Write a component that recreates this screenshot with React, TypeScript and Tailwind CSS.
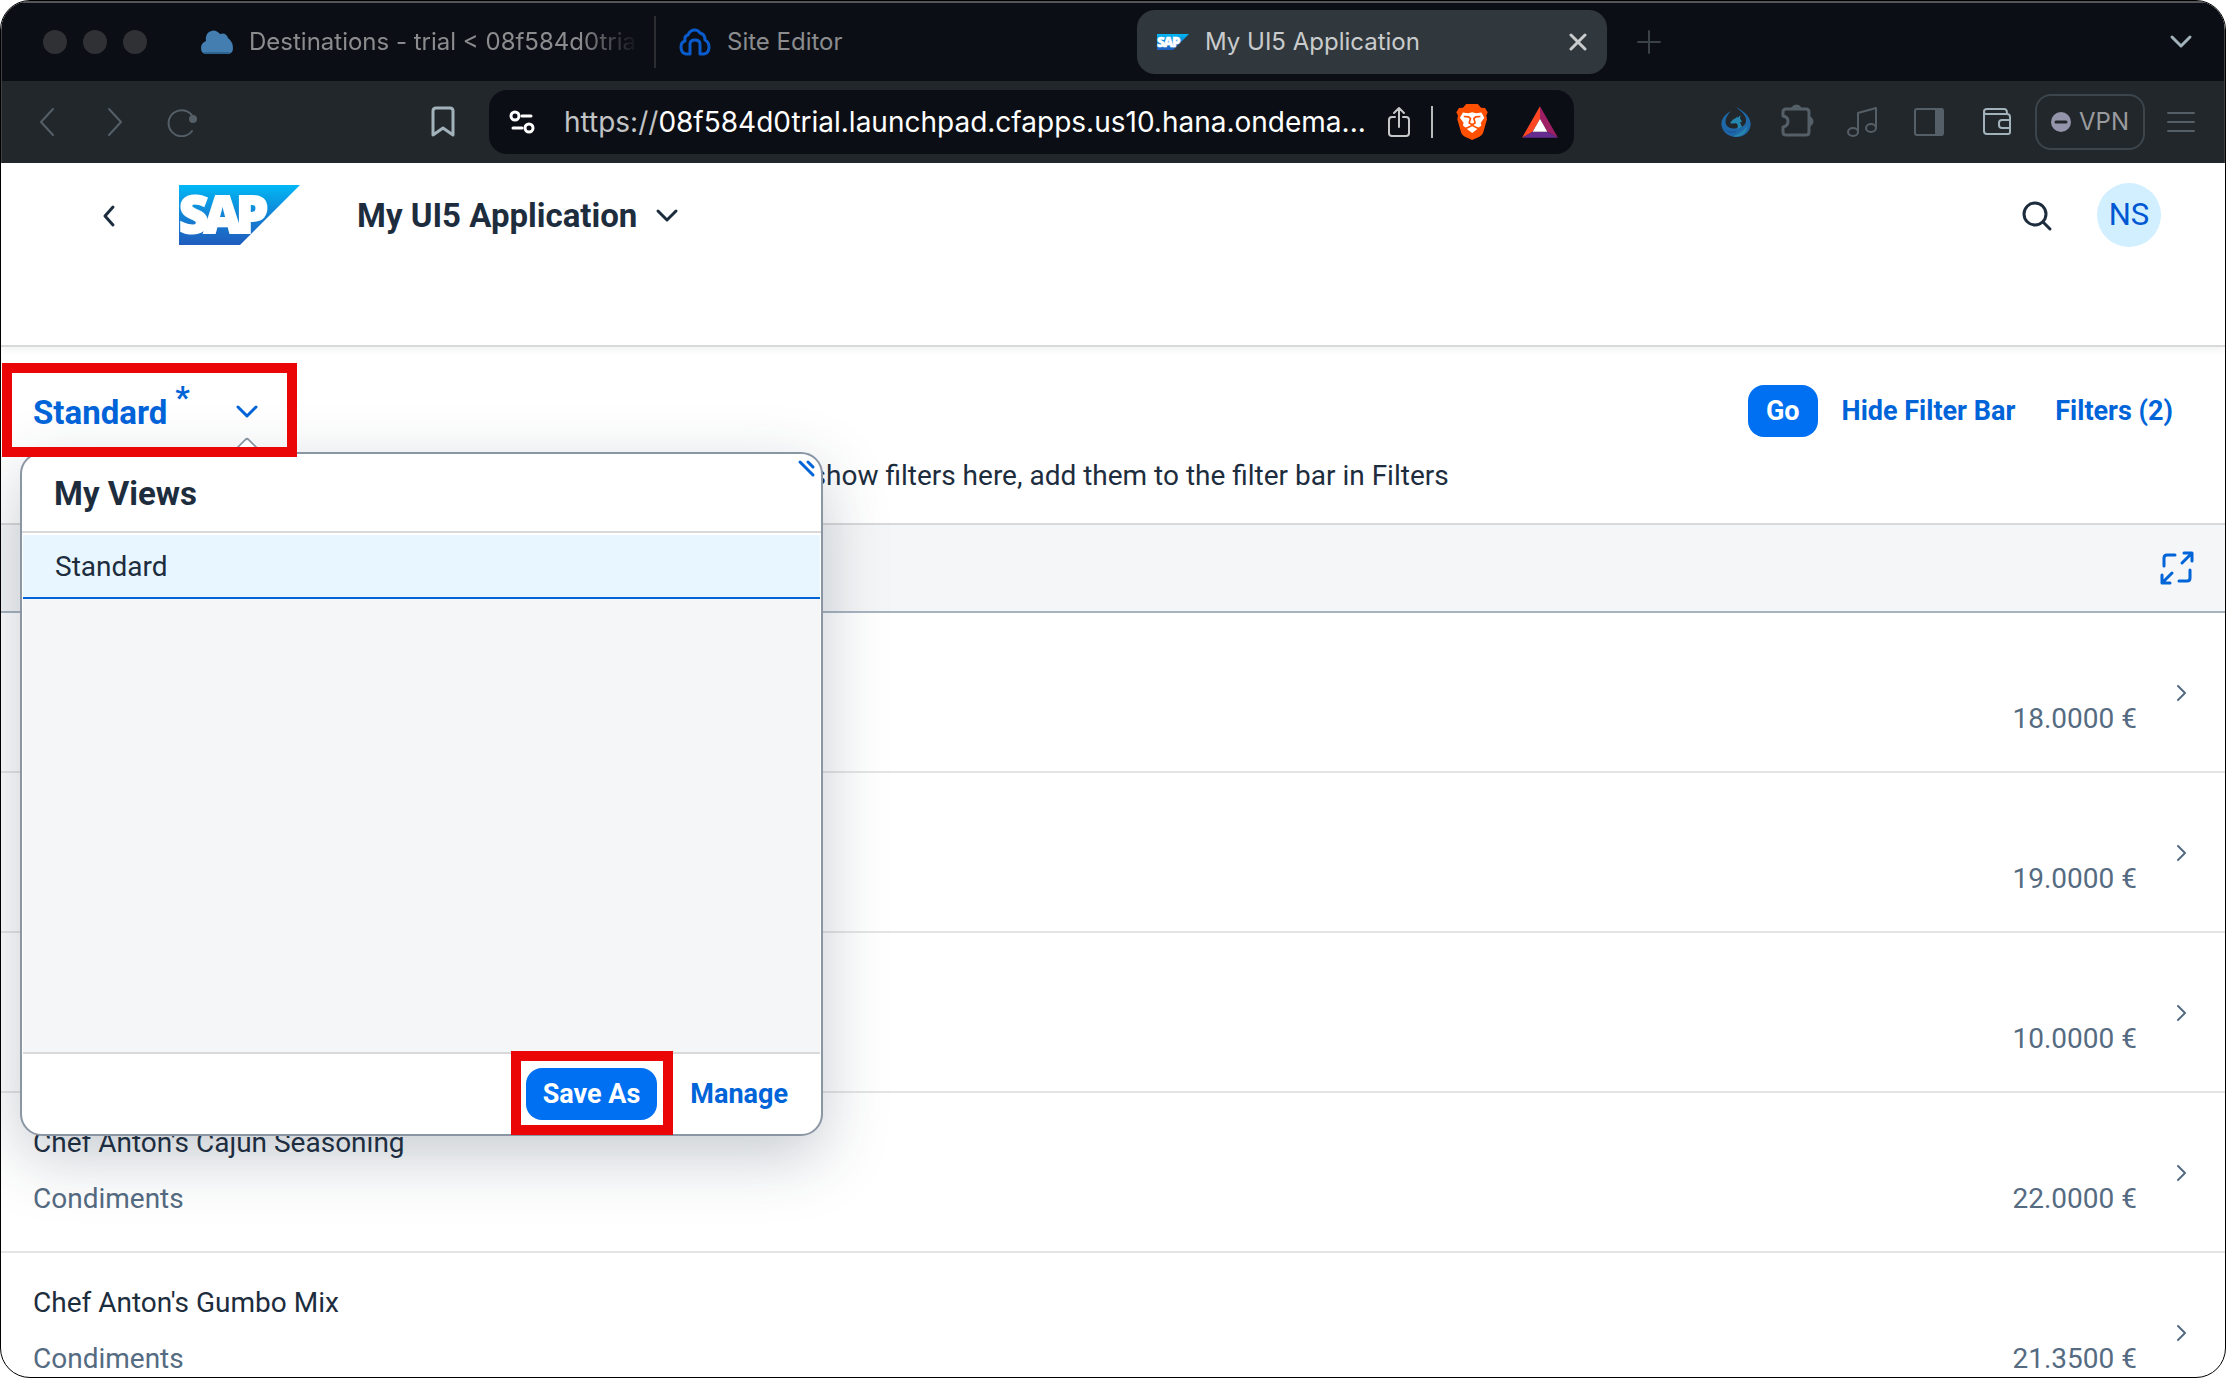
import type { ReactNode } from "react";

function Glyph({
  w,
  h,
  d,
  stroke = 2,
  className = "",
  children,
}: {
  w: number;
  h: number;
  d?: string;
  stroke?: number;
  className?: string;
  children?: ReactNode;
}) {
  return (
    <svg
      width={w}
      height={h}
      viewBox={`0 0 ${w} ${h}`}
      fill="none"
      stroke="currentColor"
      strokeWidth={stroke}
      strokeLinecap="round"
      strokeLinejoin="round"
      className={`shrink-0 ${className}`}
      aria-hidden="true"
    >
      {d && <path d={d} />}
      {children}
    </svg>
  );
}

function SapLogo({ id, className }: { id: string; className: string }) {
  return (
    <svg viewBox="0 0 121 60" className={`shrink-0 overflow-visible ${className}`} role="img" aria-label="SAP">
      <defs>
        <linearGradient id={id} x1="0" y1="0" x2="0" y2="1">
          <stop offset="0" stopColor="#00b8f5" />
          <stop offset="0.45" stopColor="#1188d8" />
          <stop offset="1" stopColor="#1f5dbd" />
        </linearGradient>
      </defs>
      <path d="M0 0H121L61 60H0Z" fill={`url(#${id})`} />
      <g fill="#fff" stroke="#fff" strokeWidth="2" fontFamily="Open Sans, sans-serif" fontWeight="800" fontSize="51">
        <text x="0" y="48">S</text>
        <text x="25" y="48">A</text>
        <text x="57" y="48">P</text>
      </g>
    </svg>
  );
}

function BraveIcon() {
  return (
    <svg width="32" height="36" viewBox="0 0 95 109" className="shrink-0" aria-hidden="true">
      <path
        fill="#ff4f00"
        d="M30 0H65L75 11L87 12L95 25L91 35L93 46L81 88Q78 95 70 99L48 109L26 99Q18 95 15 88L3 46L5 35L0 25L8 12L20 11Z"
      />
      <path
        fill="#fff"
        d="M20 26L36 28L48 25L60 28L76 26L85 42L74 57L76 65L68 71L60 68L48 62L36 68L28 71L20 65L22 57L11 42Z"
      />
      <path fill="#fff" d="M32 76L48 67L64 76L48 88Z" />
      <path fill="none" stroke="#ff4f00" strokeWidth="5" d="M23 38L37 39L43 44L39 57L48 63L57 57L53 44L59 39L73 38" />
    </svg>
  );
}

function BatIcon() {
  return (
    <svg width="36" height="32" viewBox="0 0 108 95" className="shrink-0" aria-hidden="true">
      <path fill="#ff4724" d="M54 0L0 95L32 77L54 38Z" />
      <path fill="#9e1f63" d="M54 0L108 95L76 77L54 38Z" />
      <path fill="#662d91" d="M0 95H108L76 77H32Z" />
      <path fill="#fff" d="M54 38L76 77H32Z" />
    </svg>
  );
}

function PhoenixIcon() {
  return (
    <svg width="30" height="30" viewBox="0 0 88 90" className="shrink-0" aria-hidden="true">
      <path
        fill="#1e68a8"
        d="M30 12C10 22 0 36 0 52C2 76 22 90 44 90C68 90 88 74 88 50C86 26 66 12 44 0C62 16 76 26 74 42C72 54 64 60 54 62C40 66 22 66 15 54C8 40 18 22 30 12Z"
      />
      <path fill="#2587b0" d="M26 48L38 34L36 38L50 28L48 34L58 24L56 34L62 44L56 46L62 60L46 66C52 58 50 52 44 49C38 48 34 52 26 48Z" />
      <path fill="#2784ad" d="M36 89C46 80 62 80 76 58C80 74 62 92 36 89Z" />
      <path fill="#1b5a9c" d="M4 62C16 74 34 76 48 70C40 84 20 82 4 62Z" />
    </svg>
  );
}

function BrowserTabs() {
  return (
    <div className="flex h-20 shrink-0 items-center border-t-2 border-[#55555a] bg-[#0c0e15] pr-[30px] text-2xl text-[#8b8c8e]">
      <div className="ml-[41px] flex gap-4">
        <span className="size-6 rounded-full bg-[#303135]" />
        <span className="size-6 rounded-full bg-[#303135]" />
        <span className="size-6 rounded-full bg-[#303135]" />
      </div>
      <a href="#destinations" className="ml-[54px] flex w-[455px] shrink-0 items-center border-r-2 border-[#2c2d31] py-[10px]">
        <svg width="32" height="24" viewBox="0 0 32 24" className="shrink-0" aria-hidden="true">
          <path fill="#447eb0" d="M6 24Q0 24 0 18Q0 13 5 11Q4 5 8 2Q14-2 19 4Q25 2 27 8Q32 12 32 18Q32 24 26 24Z" />
          <path fill="#2d6391" d="M3 22H29V24H3Z" />
        </svg>
        <span className="ml-4 w-[390px] overflow-hidden mask-r-from-85% mask-r-to-100% whitespace-nowrap">
          Destinations - trial &lt; 08f584d0trial
        </span>
      </a>
      <a href="#site-editor" className="ml-[23px] flex w-[458px] shrink-0 items-center gap-4">
        <Glyph w={32} h={28} stroke={3} className="text-[#0a5ccc]">
          <path d="M11 26H7Q2 25 2 19Q2 14 6 13Q5 8 9 7Q11 2 16 2Q19 2 21 5Q26 6 26 12Q30 14 30 19Q30 25 25 26H21V16Q21 12 16 12Q11 12 11 16Z" />
        </Glyph>
        Site Editor
      </a>
      <div className="flex h-16 w-[470px] shrink-0 items-center rounded-[18px] bg-[#30383d] px-5 text-[#c9cbcc]">
        <SapLogo id="sap-tab" className="h-4 w-8" />
        <a href="#application" className="ml-4 grow">
          My UI5 Application
        </a>
        <button type="button" aria-label="Close tab">
          <Glyph w={18} h={18} d="M2 2L16 16M16 2L2 16" stroke={3} />
        </button>
      </div>
      <button type="button" aria-label="New tab" className="ml-[30px] text-[#3a4248]">
        <Glyph w={24} h={24} d="M12 1V23M1 12H23" />
      </button>
      <button type="button" aria-label="List tabs" className="ml-auto text-[#a2b2ba]">
        <Glyph w={26} h={18} d="M4 4L13 13L22 4" stroke={3} />
      </button>
    </div>
  );
}

function BrowserToolbar() {
  return (
    <div className="flex h-[82px] shrink-0 items-center bg-[#22272b] pr-[29px] text-[#555f67]">
      <button type="button" aria-label="Back" className="ml-9">
        <Glyph w={18} h={30} d="M15 2L3 15L15 28" />
      </button>
      <button type="button" aria-label="Forward" className="ml-[50px]">
        <Glyph w={18} h={30} d="M3 2L15 15L3 28" />
      </button>
      <button type="button" aria-label="Reload" className="ml-[42px]">
        <Glyph w={32} h={30}>
          <path d="M26 24A13 13 0 1 1 27 10" />
          <circle cx="27" cy="12" r="3" fill="currentColor" />
        </Glyph>
      </button>
      <button type="button" aria-label="Bookmark" className="ml-[233px] text-[#a2b2ba]">
        <Glyph w={24} h={32} d="M2 5Q2 2 5 2H19Q22 2 22 5V29L12 22L2 29Z" stroke={3} />
      </button>
      <div className="ml-[34px] flex h-16 w-[1085px] shrink-0 items-center rounded-[18px] bg-[#0c0e15] pr-4 pl-5 text-white">
        <Glyph w={26} h={24} stroke={3}>
          <circle cx="6" cy="6" r="4" />
          <path d="M13 6H22M4 18H13" />
          <circle cx="20" cy="18" r="4" />
        </Glyph>
        <p className="ml-[29px] grow text-[28px] whitespace-nowrap">
          <span className="text-[#c2c3c5]">https://</span>08f584d0trial.launchpad.cfapps.us10.hana.ondema...
        </p>
        <button type="button" aria-label="Share" className="text-[#c6c7c9]">
          <Glyph w={24} h={32} d="M8 11H5Q2 11 2 14V27Q2 30 5 30H19Q22 30 22 27V14Q22 11 19 11H16M12 21V2M7 7L12 2L17 7" />
        </button>
        <span className="mr-[23px] ml-5 h-8 w-0.5 shrink-0 bg-[#b9babc]" />
        <button type="button" aria-label="Shields">
          <BraveIcon />
        </button>
        <button type="button" aria-label="Rewards" className="ml-[34px]">
          <BatIcon />
        </button>
      </div>
      <div className="ml-auto flex items-center">
        <button type="button" aria-label="Wallet extension">
          <PhoenixIcon />
        </button>
        <button type="button" aria-label="Extensions" className="ml-[30px] pb-1">
          <Glyph w={34} h={34} stroke={3}>
            <path d="M5 6H25Q28 6 28 9V29Q28 32 25 32H5Q2 32 2 29V24Q7 23 7 18Q7 14 2 13V9Q2 6 5 6Z" />
            <path d="M12 5A4 4 0 0 1 19 5ZM29 15A4 4 0 0 1 29 22Z" fill="currentColor" />
          </Glyph>
        </button>
        <button type="button" aria-label="Media" className="ml-[31px]">
          <Glyph w={32} h={34}>
            <path d="M12 27V8L30 3V22" />
            <ellipse cx="7" cy="27" rx="5" ry="4" />
            <ellipse cx="25" cy="23" rx="5" ry="4" />
          </Glyph>
        </button>
        <button type="button" aria-label="Sidebar" className="ml-9">
          <Glyph w={30} h={28}>
            <rect x="1" y="1" width="28" height="26" rx="2" />
            <path d="M22 1H28V27H22Z" fill="currentColor" />
          </Glyph>
        </button>
        <button type="button" aria-label="Wallet" className="ml-[38px] text-[#a2b2ba]">
          <Glyph w={30} h={28}>
            <path d="M2 3V23Q2 26 5 26H26Q28 26 28 24V9Q28 6 25 6H4Q2 6 2 3.5Q2 1 5 1H22Q25 1 25 5M28 12H20Q17 12 17 15V17Q17 20 20 20H28" />
          </Glyph>
        </button>
        <button
          type="button"
          className="ml-[23px] flex h-14 w-[110px] items-center justify-center gap-2 rounded-2xl border-2 border-[#3b454b] text-2xl text-[#9a9b9e]"
        >
          <svg width="20" height="20" viewBox="0 0 20 20" aria-hidden="true">
            <circle cx="10" cy="10" r="10" fill="#9494aa" />
            <path d="M5 10H15" stroke="#22272b" strokeWidth="3" strokeLinecap="round" />
          </svg>
          VPN
        </button>
        <button type="button" aria-label="Menu" className="ml-[22px]">
          <Glyph w={28} h={22} d="M1 2H27M1 11H27M1 20H27" />
        </button>
      </div>
    </div>
  );
}

function ShellHeader() {
  return (
    <header className="z-10 flex h-[184px] shrink-0 items-start border-b-2 border-[#d9d9d9] bg-white pt-5 pr-16 pl-[99px] text-[#1d2d3e] shadow-[0_2px_8px_rgba(34,53,72,0.08)]">
      <div className="flex h-16 grow items-center">
        <button type="button" aria-label="Back">
          <Glyph w={18} h={26} d="M13 5L5 14L13 23" stroke={3} />
        </button>
        <SapLogo id="sap-shell" className="ml-[61px] h-[60px] w-[121px]" />
        <button type="button" className="ml-[57px] flex items-center gap-[18px] pt-0.5 text-[33px] font-bold">
          My UI5 Application
          <Glyph w={24} h={18} d="M3 4L12 13L21 4" stroke={3} />
        </button>
        <button type="button" aria-label="Search" className="ml-auto pt-0.5">
          <Glyph w={32} h={32} stroke={3}>
            <circle cx="14" cy="14" r="11" />
            <path d="M22 22L29 29" />
          </Glyph>
        </button>
        <button type="button" className="ml-11 size-16 rounded-full bg-[#d1efff] text-[31px] text-[#0057d2]">
          NS
        </button>
      </div>
    </header>
  );
}

function ViewsPopover() {
  return (
    <div className="absolute top-[67px] left-[-13px] z-20 flex h-[684px] w-[803px] flex-col rounded-[22px] border-2 border-[#8b96a4] bg-white shadow-[0_20px_64px_rgba(34,53,72,0.26)]">
      <span className="absolute -top-[13px] left-[214px] size-[22px] rotate-45 rounded-sm border-t-2 border-l-2 border-[#8b96a4] bg-white" />
      <Glyph w={20} h={20} d="M3 4L16 17M11 4L16 9" stroke={3} className="absolute top-1 right-1 text-[#0064d9]" />
      <h2 className="h-[79px] border-b-2 border-[#d9d9d9] px-8 pt-0.5 text-[33px] leading-[75px] font-bold text-[#1d2d3e]">My Views</h2>
      <ul className="mx-px mt-0.5 grow bg-[#f5f6f7]">
        <li className="h-16 border-b-2 border-[#0064d9] bg-[#e8f7ff]">
          <button type="button" className="size-full px-8 pt-0.5 text-left text-[28px] text-[#1d2d3e]">
            Standard
          </button>
        </li>
      </ul>
      <footer className="mx-px flex h-[82px] shrink-0 items-center justify-end gap-px border-t-2 border-[#d9d9d9] pr-4">
        <div className="relative">
          <button type="button" className="mr-4 h-[52px] rounded-2xl bg-[#0070f2] px-[17px] text-[27px] font-bold text-white">
            Save As
          </button>
          <span className="pointer-events-none absolute -top-[17px] right-0 -bottom-[15px] -left-[15px] border-10 border-[#ea0606]" />
        </div>
        <button type="button" className="h-[52px] px-4 text-[27px] font-bold text-[#0064d9]">
          Manage
        </button>
      </footer>
    </div>
  );
}

function FilterBar() {
  return (
    <section className="h-[178px] shrink-0 border-b-2 border-[#d9d9d9] bg-white pt-[38px] pr-9 pl-8">
      <div className="relative flex h-[52px] items-center">
        <button type="button" className="flex items-center pt-1 text-[33px] font-bold text-[#0064d9]">
          Standard
          <sup className="ml-2 text-[32px]">*</sup>
          <Glyph w={26} h={18} d="M4 3L13 12L22 3" stroke={3} className="ml-[44px]" />
        </button>
        <div className="ml-auto flex gap-2 text-[27px] font-bold text-[#0064d9]">
          <button type="button" className="h-[52px] rounded-2xl bg-[#0070f2] px-[18px] text-white">
            Go
          </button>
          <button type="button" className="h-[52px] px-4">
            Hide Filter Bar
          </button>
          <button type="button" className="h-[52px] px-4">
            Filters (2)
          </button>
        </div>
        <ViewsPopover />
        <span className="pointer-events-none absolute -top-[22px] -left-[31px] z-30 h-[94px] w-[295px] border-10 border-[#ea0606]" />
      </div>
      <p className="mt-[18px] text-center text-[28px] leading-[42px] text-[#1d2d3e]">
        To show filters here, add them to the filter bar in Filters
      </p>
    </section>
  );
}

const products = [
  { name: "Chai", category: "Beverages", price: "18.0000 €" },
  { name: "Chang", category: "Beverages", price: "19.0000 €" },
  { name: "Aniseed Syrup", category: "Condiments", price: "10.0000 €" },
  { name: "Chef Anton's Cajun Seasoning", category: "Condiments", price: "22.0000 €" },
  { name: "Chef Anton's Gumbo Mix", category: "Condiments", price: "21.3500 €" },
];

function ProductList() {
  return (
    <section>
      <div className="flex h-[88px] items-center justify-end border-b-2 border-[#a8b3c0] bg-[#f5f6f7] pr-7">
        <button type="button" aria-label="Full screen" className="text-[#0064d9]">
          <Glyph w={40} h={40} stroke={3}>
            <path d="M7 18V10Q7 7 10 7H18M33 22V30Q33 33 30 33H22" />
            <path d="M25 15L34 6M27 5H35V13M15 25L6 34M5 27V35H13" />
          </Glyph>
        </button>
      </div>
      <ul>
        {products.map((p) => (
          <li key={p.name} className="flex h-40 items-start border-b-2 border-[#e5e5e5] pt-[22px] pr-9 pl-8 text-[28px] leading-[56px]">
            <div className="grow">
              <p className="text-[#1d2d3e]">{p.name}</p>
              <p className="text-[#556b82]">{p.category}</p>
            </div>
            <p className="mt-14 text-[#556b82]">{p.price}</p>
            <Glyph w={14} h={20} d="M3 3L10 10L3 17" className="mt-12 ml-[38px] text-[#556b82]" />
          </li>
        ))}
      </ul>
    </section>
  );
}

export default function App() {
  return (
    <div className="h-screen bg-white">
      <div className="flex h-full flex-col overflow-hidden rounded-[30px] border border-black bg-white font-['Inter',sans-serif]">
        <div className="shrink-0 border-x border-[#3f4144]">
          <BrowserTabs />
          <BrowserToolbar />
        </div>
        <main className="flex min-h-0 grow flex-col overflow-hidden font-['Roboto',sans-serif]">
          <ShellHeader />
          <FilterBar />
          <ProductList />
        </main>
      </div>
    </div>
  );
}
